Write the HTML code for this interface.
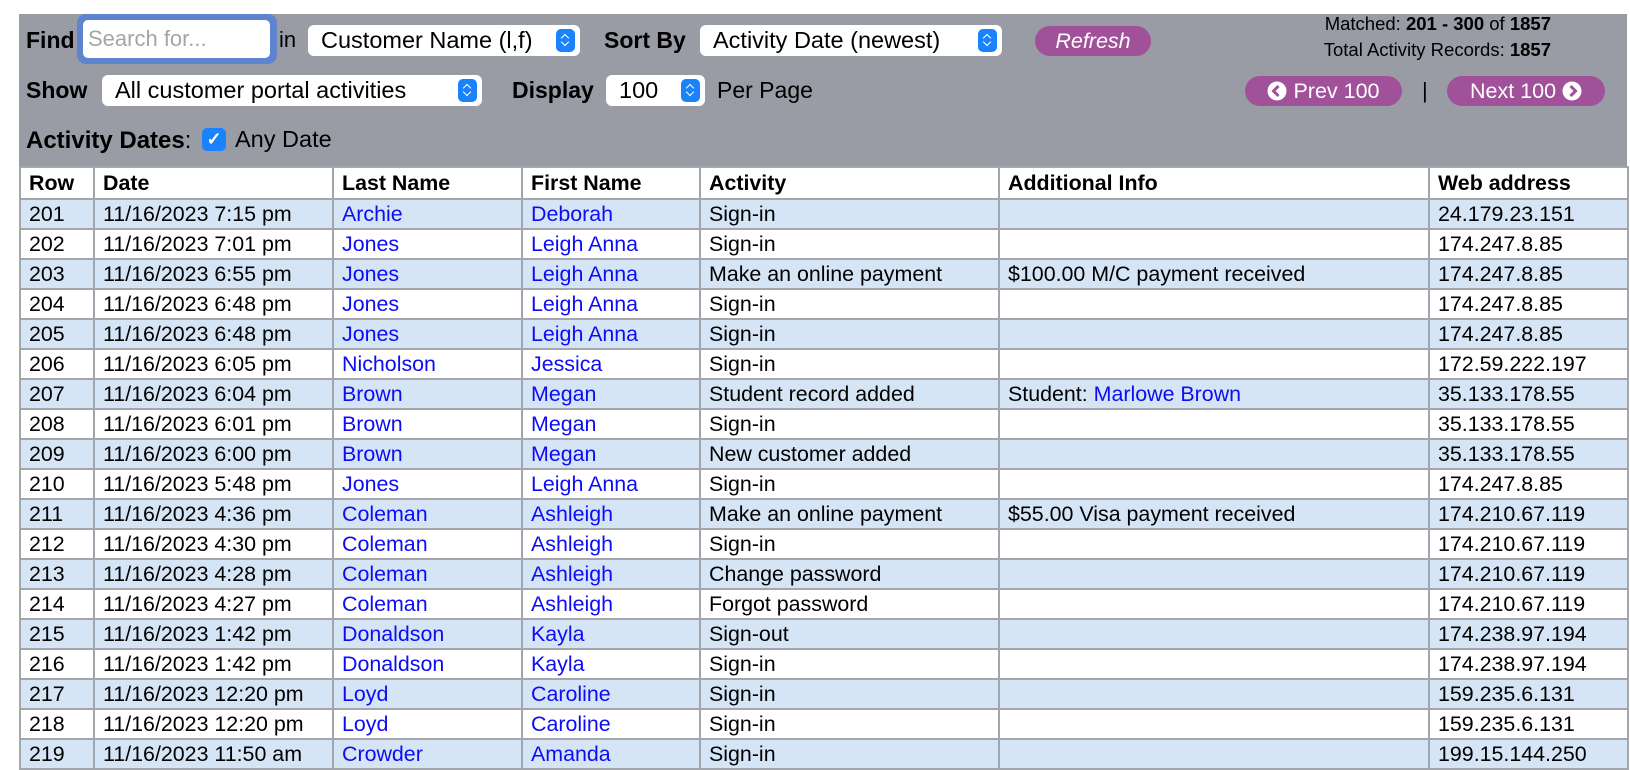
<!DOCTYPE html>
<html><head><meta charset="utf-8"><style>
*{box-sizing:border-box}
body{margin:0;width:1630px;height:766px;overflow:hidden;background:#fff;font-family:"Liberation Sans",Arial,sans-serif;color:#000}
.bar{position:absolute;left:19px;top:14px;width:1608px;height:152px;background:#999ca4}
.a{position:absolute;white-space:nowrap}
.lbl{font-weight:bold;font-size:23px}
.sel{position:absolute;background:#fff;border-radius:6px;font-size:23.5px;padding-left:13px;line-height:31px;height:31px;white-space:nowrap}
.sel .ar{position:absolute;right:5px;top:4px;width:19px;height:23px;border-radius:5px;background:#1a82fb}
.sel .ar:before,.sel .ar:after{content:"";position:absolute;left:6px;width:5px;height:5px;border-left:1.6px solid #fff;border-top:1.6px solid #fff}
.sel .ar:before{top:6px;transform:rotate(45deg)}
.sel .ar:after{top:10px;transform:rotate(225deg)}
.btn{position:absolute;background:#a0519a;color:#fff;border-radius:16px;font-size:21.5px;text-align:center;line-height:30px;height:30px}
.btn svg{vertical-align:-3px}
table{position:absolute;left:19px;top:166px;width:1608px;border-collapse:collapse;table-layout:fixed;font-size:21.4px}
td,th{border:2px solid #a3a6ad;padding:0 0 0 8px;text-align:left;white-space:nowrap;overflow:hidden;height:30px;line-height:26px}
th{height:32px;background:#fff}
tr.o td{background:#d6e5f6}
a{color:#0c0cf5;text-decoration:none}
</style></head><body>
<div class="bar"></div>
<div class="a lbl" style="left:26px;top:27px">Find</div>
<div class="a" style="left:77px;top:14px;width:200px;height:50px;border-radius:9px;background:#5e84cf"></div>
<div class="a" style="left:83px;top:20px;width:187px;height:38px;border-radius:5px;background:#fff;color:#a5a5a5;font-size:22px;padding:6px 0 0 5px">Search for...</div>
<div class="a" style="left:279px;top:27px;font-size:22px">in</div>
<div class="sel" style="left:308px;top:25px;width:272px">Customer Name (l,f)<span class="ar"></span></div>
<div class="a lbl" style="left:604px;top:27px">Sort By</div>
<div class="sel" style="left:700px;top:25px;width:302px">Activity Date (newest)<span class="ar"></span></div>
<div class="btn" style="left:1035px;top:26px;width:116px;font-style:italic">Refresh</div>
<div class="a" style="right:79px;top:12px;font-size:18.5px;text-align:right;line-height:24px">Matched: <b>201 - 300</b> of <b>1857</b></div>
<div class="a" style="right:79px;top:38px;font-size:18.5px;text-align:right;line-height:24px">Total Activity Records: <b>1857</b></div>

<div class="a lbl" style="left:26px;top:77px">Show</div>
<div class="sel" style="left:102px;top:75px;width:380px">All customer portal activities<span class="ar"></span></div>
<div class="a lbl" style="left:512px;top:77px">Display</div>
<div class="sel" style="left:606px;top:75px;width:99px">100<span class="ar"></span></div>
<div class="a" style="left:717px;top:77px;font-size:23px">Per Page</div>
<div class="btn" style="left:1245px;top:76px;width:157px"><svg width="20" height="20" viewBox="0 0 20 20"><circle cx="10" cy="10" r="9.5" fill="#fff"/><path d="M11.5 5 L6.5 10 L11.5 15" stroke="#a0519a" stroke-width="3" fill="none"/></svg> Prev 100</div>
<div class="a" style="left:1422px;top:78px;font-size:22px">|</div>
<div class="btn" style="left:1447px;top:76px;width:158px">Next 100 <svg width="20" height="20" viewBox="0 0 20 20"><circle cx="10" cy="10" r="9.5" fill="#fff"/><path d="M8.5 5 L13.5 10 L8.5 15" stroke="#a0519a" stroke-width="3" fill="none"/></svg></div>

<div class="a lbl" style="left:26px;top:127px;font-size:24px">Activity Dates<span style="font-weight:normal">:</span></div>
<div class="a" style="left:202px;top:128px;width:24px;height:23px;border-radius:5px;background:#1a82fb;color:#fff;font-size:18px;text-align:center;line-height:23px;font-weight:bold">&#x2713;</div>
<div class="a" style="left:235px;top:126px;font-size:23.5px">Any Date</div>

<table>
<colgroup><col style="width:74px"><col style="width:239px"><col style="width:189px"><col style="width:178px"><col style="width:299px"><col style="width:430px"><col style="width:199px"></colgroup>
<tr><th>Row</th><th>Date</th><th>Last Name</th><th>First Name</th><th>Activity</th><th>Additional Info</th><th>Web address</th></tr>
<tr class="o"><td>201</td><td>11/16/2023 7:15 pm</td><td><a>Archie</a></td><td><a>Deborah</a></td><td>Sign-in</td><td></td><td>24.179.23.151</td></tr>
<tr><td>202</td><td>11/16/2023 7:01 pm</td><td><a>Jones</a></td><td><a>Leigh Anna</a></td><td>Sign-in</td><td></td><td>174.247.8.85</td></tr>
<tr class="o"><td>203</td><td>11/16/2023 6:55 pm</td><td><a>Jones</a></td><td><a>Leigh Anna</a></td><td>Make an online payment</td><td>$100.00 M/C payment received</td><td>174.247.8.85</td></tr>
<tr><td>204</td><td>11/16/2023 6:48 pm</td><td><a>Jones</a></td><td><a>Leigh Anna</a></td><td>Sign-in</td><td></td><td>174.247.8.85</td></tr>
<tr class="o"><td>205</td><td>11/16/2023 6:48 pm</td><td><a>Jones</a></td><td><a>Leigh Anna</a></td><td>Sign-in</td><td></td><td>174.247.8.85</td></tr>
<tr><td>206</td><td>11/16/2023 6:05 pm</td><td><a>Nicholson</a></td><td><a>Jessica</a></td><td>Sign-in</td><td></td><td>172.59.222.197</td></tr>
<tr class="o"><td>207</td><td>11/16/2023 6:04 pm</td><td><a>Brown</a></td><td><a>Megan</a></td><td>Student record added</td><td>Student: <a>Marlowe Brown</a></td><td>35.133.178.55</td></tr>
<tr><td>208</td><td>11/16/2023 6:01 pm</td><td><a>Brown</a></td><td><a>Megan</a></td><td>Sign-in</td><td></td><td>35.133.178.55</td></tr>
<tr class="o"><td>209</td><td>11/16/2023 6:00 pm</td><td><a>Brown</a></td><td><a>Megan</a></td><td>New customer added</td><td></td><td>35.133.178.55</td></tr>
<tr><td>210</td><td>11/16/2023 5:48 pm</td><td><a>Jones</a></td><td><a>Leigh Anna</a></td><td>Sign-in</td><td></td><td>174.247.8.85</td></tr>
<tr class="o"><td>211</td><td>11/16/2023 4:36 pm</td><td><a>Coleman</a></td><td><a>Ashleigh</a></td><td>Make an online payment</td><td>$55.00 Visa payment received</td><td>174.210.67.119</td></tr>
<tr><td>212</td><td>11/16/2023 4:30 pm</td><td><a>Coleman</a></td><td><a>Ashleigh</a></td><td>Sign-in</td><td></td><td>174.210.67.119</td></tr>
<tr class="o"><td>213</td><td>11/16/2023 4:28 pm</td><td><a>Coleman</a></td><td><a>Ashleigh</a></td><td>Change password</td><td></td><td>174.210.67.119</td></tr>
<tr><td>214</td><td>11/16/2023 4:27 pm</td><td><a>Coleman</a></td><td><a>Ashleigh</a></td><td>Forgot password</td><td></td><td>174.210.67.119</td></tr>
<tr class="o"><td>215</td><td>11/16/2023 1:42 pm</td><td><a>Donaldson</a></td><td><a>Kayla</a></td><td>Sign-out</td><td></td><td>174.238.97.194</td></tr>
<tr><td>216</td><td>11/16/2023 1:42 pm</td><td><a>Donaldson</a></td><td><a>Kayla</a></td><td>Sign-in</td><td></td><td>174.238.97.194</td></tr>
<tr class="o"><td>217</td><td>11/16/2023 12:20 pm</td><td><a>Loyd</a></td><td><a>Caroline</a></td><td>Sign-in</td><td></td><td>159.235.6.131</td></tr>
<tr><td>218</td><td>11/16/2023 12:20 pm</td><td><a>Loyd</a></td><td><a>Caroline</a></td><td>Sign-in</td><td></td><td>159.235.6.131</td></tr>
<tr class="o"><td>219</td><td>11/16/2023 11:50 am</td><td><a>Crowder</a></td><td><a>Amanda</a></td><td>Sign-in</td><td></td><td>199.15.144.250</td></tr>
</table>
</body></html>
